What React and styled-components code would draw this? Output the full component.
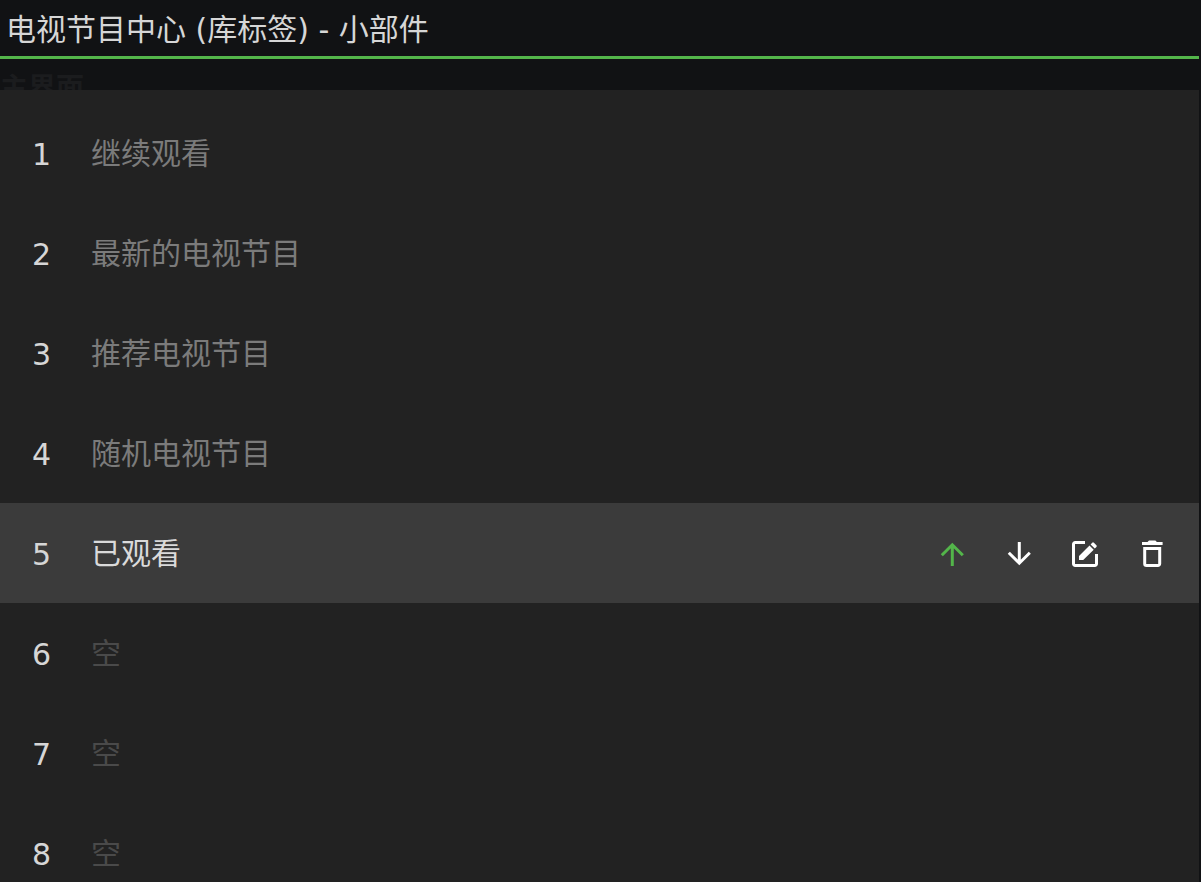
import React from 'react';
import styled, { createGlobalStyle } from 'styled-components';

const widgets = [
  { id: 1, label: '继续观看' },
  { id: 2, label: '最新的电视节目' },
  { id: 3, label: '推荐电视节目' },
  { id: 4, label: '随机电视节目' },
  { id: 5, label: '已观看', selected: true },
  { id: 6, label: '空', empty: true },
  { id: 7, label: '空', empty: true },
  { id: 8, label: '空', empty: true },
];

function UpIcon() {
  return (
    <Icon viewBox="0 0 32 32">
      <path d="M16.3 28V6.8M5.8 17.3 16.3 6.8l10.5 10.5" />
    </Icon>
  );
}

function DownIcon() {
  return (
    <Icon viewBox="0 0 32 32">
      <path d="M16.3 4v21.2M5.8 14.7l10.5 10.5 10.5-10.5" />
    </Icon>
  );
}

function EditIcon() {
  return (
    <Icon viewBox="0 0 32 32">
      <path d="M15 4.5H5.2a1.7 1.7 0 0 0-1.7 1.7v19.6a1.7 1.7 0 0 0 1.7 1.7h19.6a1.7 1.7 0 0 0 1.7-1.7V16" />
      <path
        d="M9 18 19.5 7.5l4.2 4.2L13.2 22H9zM20.6 6.4l1.6-1.6a1.2 1.2 0 0 1 1.7 0l2.5 2.5a1.2 1.2 0 0 1 0 1.7l-1.6 1.6z"
        fill="currentColor"
        stroke="none"
      />
    </Icon>
  );
}

function TrashIcon() {
  return (
    <Icon viewBox="0 0 32 32">
      <path d="M7.7 10.5h15v15.2a1.8 1.8 0 0 1-1.8 1.8H9.5a1.8 1.8 0 0 1-1.8-1.8z" />
      <path
        d="M5 4h5.5L12 2.6h6.4L19.9 4h5.7v3H5z"
        fill="currentColor"
        stroke="none"
      />
    </Icon>
  );
}

function App() {
  return (
    <Page>
      <GlobalStyle />
      <Title>电视节目中心 (库标签) - 小部件</Title>
      <Section>主界面</Section>
      <List>
        {widgets.map(({ id, label, selected, empty }) => (
          <Row key={id} $selected={selected}>
            <Number>{id}</Number>
            <Label $selected={selected} $empty={empty}>
              {label}
            </Label>
            {selected && (
              <Actions>
                <Action aria-label="上移" $active>
                  <UpIcon />
                </Action>
                <Action aria-label="下移">
                  <DownIcon />
                </Action>
                <Action aria-label="编辑">
                  <EditIcon />
                </Action>
                <Action aria-label="删除">
                  <TrashIcon />
                </Action>
              </Actions>
            )}
          </Row>
        ))}
      </List>
    </Page>
  );
}

export default App;

const GlobalStyle = createGlobalStyle`
  * {
    box-sizing: border-box;
  }

  body {
    margin: 0;
    background-color: #111214;
    color: #d6d6d6;
    font-family: 'DejaVu Sans', 'Noto Sans CJK SC', sans-serif;
    font-size: 30px;
  }
`;

const Page = styled.main`
  height: 100vh;
  padding-right: 2px;
  overflow: hidden;
  display: flex;
  flex-direction: column;
`;

const Title = styled.h1`
  flex: none;
  height: 59px;
  margin: 0;
  padding-left: 6px;
  border-bottom: 3px solid #53b54a;
  font-size: 30px;
  font-weight: 400;
  line-height: 59px;
`;

const Section = styled.h2`
  flex: none;
  height: 31px;
  margin: 0;
  overflow: hidden;
  color: #1b1c1e;
  font-size: 28px;
  font-weight: 700;
  line-height: 59px;
`;

const List = styled.ol`
  flex: 1;
  margin: 0;
  padding: 13px 0 0;
  list-style: none;
  background-color: #222222;
`;

const Row = styled.li`
  height: 100px;
  padding: 2px 30px 0 32px;
  display: flex;
  align-items: center;
  background-color: ${({ $selected }) => ($selected ? '#3b3b3b' : 'transparent')};
`;

const Number = styled.span`
  width: 59px;
`;

const Label = styled.span`
  flex: 1;
  padding-bottom: 6px;
  color: ${({ $selected, $empty }) => {
    if ($selected) return '#dadada';
    return $empty ? '#4a4a4a' : '#7b7b7b';
  }};
`;

const Actions = styled.div`
  display: flex;
  gap: 35px;
`;

const Action = styled.button`
  width: 32px;
  height: 32px;
  padding: 0;
  border: none;
  background: none;
  color: ${({ $active }) => ($active ? '#53b54a' : '#ffffff')};
  cursor: pointer;
`;

const Icon = styled.svg`
  display: block;
  width: 32px;
  height: 32px;
  fill: none;
  stroke: currentColor;
  stroke-width: 3;
`;
